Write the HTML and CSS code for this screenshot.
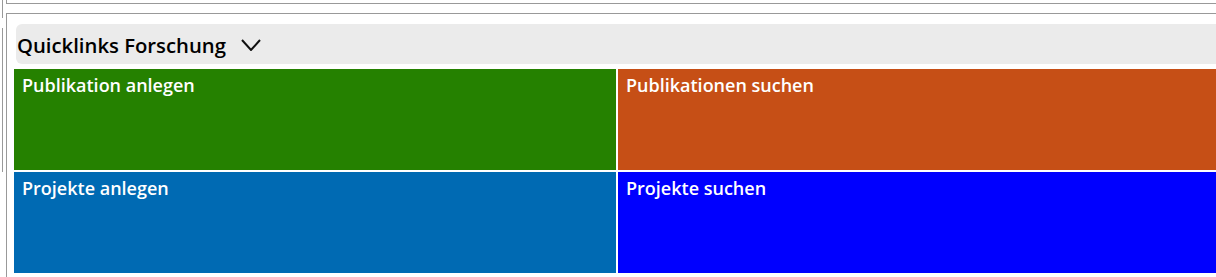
FILE: index.html
```html
<!DOCTYPE html>
<html lang="de">
<head>
    <meta charset="UTF-8">
    <title>Quicklinks Forschung</title>
    <link rel="stylesheet" href="styles.css">
</head>
<body>
    <div class="page">
        <div class="rail">
            <div class="rail-top"></div>
            <div class="rail-bottom"></div>
        </div>
        <div class="main">
            <div class="prev-box"></div>
            <section class="panel">
                <div class="panel-head">
                    <span class="panel-title">Quicklinks Forschung</span>
                    <svg class="chevron" width="20" height="12" viewBox="0 0 20 12">
                        <polyline points="1,1 10,11 19,1" fill="none" stroke="#111" stroke-width="2"/>
                    </svg>
                </div>
                <div class="tiles">
                    <a class="tile tile-green" href="#">Publikation anlegen</a>
                    <a class="tile tile-orange" href="#">Publikationen suchen</a>
                    <a class="tile tile-teal" href="#">Projekte anlegen</a>
                    <a class="tile tile-blue" href="#">Projekte suchen</a>
                </div>
            </section>
        </div>
    </div>
</body>
</html>
```

FILE: styles.css
```css
body {
    margin: 0;
    padding: 0;
    background: #fff;
    font-family: 'Open Sans', sans-serif;
    overflow: hidden;
}

.page {
    display: flex;
    width: 1230px;
    height: 277px;
}

.rail {
    width: 2px;
    margin-left: 2px;
    margin-right: 2px;
    display: flex;
    flex-direction: column;
    gap: 10px;
}

.rail-top {
    height: 18px;
    border-left: 1px solid #999;
}

.rail-bottom {
    height: 144px;
    border-left: 1px solid #999;
}

.main {
    flex: 1;
    display: flex;
    flex-direction: column;
}

.prev-box {
    height: 3px;
    border-left: 1px solid #999;
    border-bottom: 1px solid #999;
}

.panel {
    flex: 1;
    margin-top: 9px;
    padding: 10px 0 0 7px;
    border-top: 1px solid #999;
    border-left: 1px solid #999;
}

.panel-head {
    display: flex;
    align-items: center;
    height: 40px;
    margin-left: 2px;
    margin-bottom: 5px;
    padding-left: 1px;
    background: #ebebeb;
    border-radius: 6px;
}

.panel-title {
    font-size: 20.3px;
    font-weight: 600;
    line-height: 24px;
    color: #000;
    margin-top: 2px;
}

.chevron {
    margin-left: 15px;
    margin-top: 1px;
}

.tiles {
    display: grid;
    grid-template-columns: 602px 602px;
    grid-auto-rows: 101px;
    gap: 2px;
}

.tile {
    display: block;
    padding: 5px 8px;
    font-size: 18px;
    font-weight: 600;
    line-height: 22px;
    color: #fff;
    text-decoration: none;
}

.tile-green {
    background: #258100;
}

.tile-orange {
    background: #c64f16;
}

.tile-teal {
    background: #006ab3;
}

.tile-blue {
    background: #0000ff;
}
```
